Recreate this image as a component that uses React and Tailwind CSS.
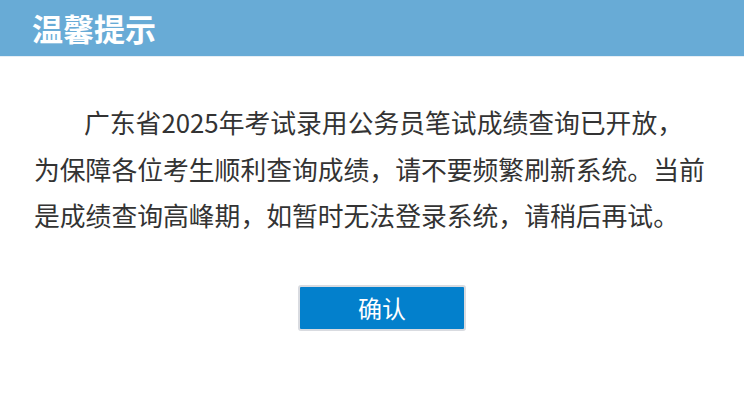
import React from 'react';

const font = { fontFamily: '"Noto Sans CJK SC", "Liberation Sans", sans-serif' };

const App = () => {
  return (
    <div className="w-[744px] h-[404px] bg-white" style={font}>
      <div className="h-[57px] bg-[#68abd6] border-b border-[#e6eef5] flex items-center px-[32px]">
        <h1 className="text-[31px] font-bold text-white leading-none -mt-[2px]">温馨提示</h1>
      </div>
      <div className="px-[34px] pt-[42px]">
        <p className="text-[25.8px] leading-[46.5px] text-[#333] indent-[50px] whitespace-nowrap">
          广东省2025年考试录用公务员笔试成绩查询已开放，<br />
          为保障各位考生顺利查询成绩，请不要频繁刷新系统。当前<br />
          是成绩查询高峰期，如暂时无法登录系统，请稍后再试。
        </p>
        <div className="flex justify-center mt-[46px]">
          <button className="w-[168px] h-[46px] bg-[#0380cc] border-2 border-[#d9dbe0] rounded-[3px] text-white text-[24px] ml-[20px]">
            确认
          </button>
        </div>
      </div>
    </div>
  );
};

export default App;
